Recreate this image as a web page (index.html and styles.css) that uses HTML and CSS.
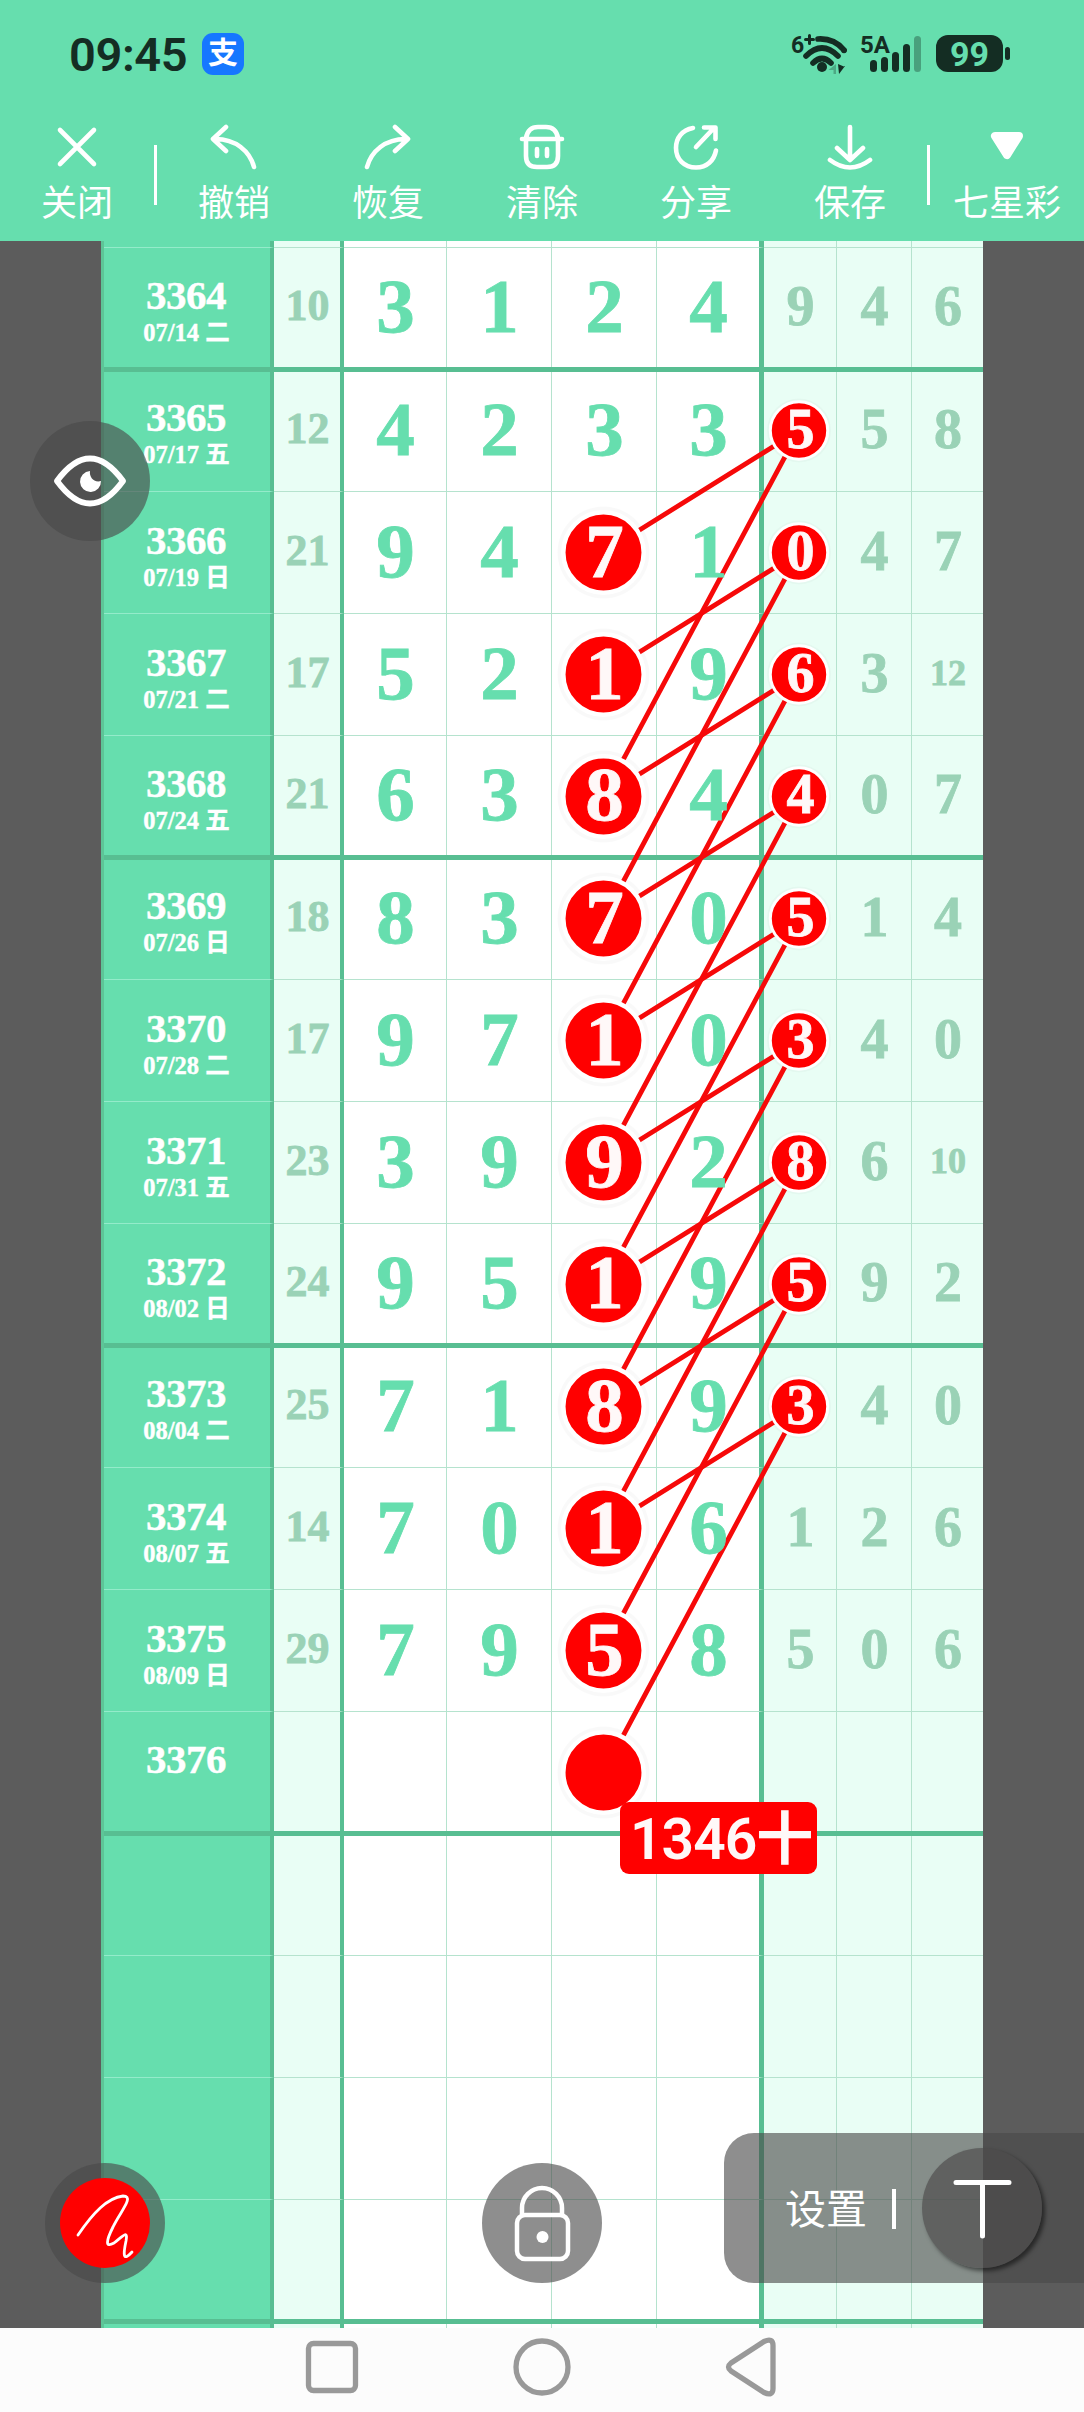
FILE: index.html
```html
<!DOCTYPE html>
<html lang="zh-CN">

<head>
    <meta charset="UTF-8">
    <meta name="viewport" content="width=device-width, initial-scale=1.0">
    <title>七星彩</title>
    <link rel="stylesheet" href="styles.css">
</head>

<body>
    <header>
        <div class="status">
            <span class="time">09:45</span>
            <span class="pay">支</span>
            <svg class="signals" width="222" height="44" viewBox="790 32 222 44">
                <g fill="#142d23">
                    <text x="791" y="53" font-size="23">6</text>
                    <path d="M805.500 39.500h8M809.500 35.500v8" stroke="#142d23" stroke-width="3" />
                    <g fill="none" stroke="#142d23" stroke-width="5.6">
                        <path d="M818 39Q834 38 844 50" />
                        <path d="M806 56Q822 40 838 56" stroke-linecap="round" />
                        <path d="M813 63Q822 54 831 63" stroke-linecap="round" />
                    </g>
                    <circle cx="844" cy="50.5" r="2.8" />
                    <circle cx="822" cy="67" r="5" />
                    <path d="M838 64l7 3v-1l-6 8z" />
                    <path d="M836 64v10h-2.500v-4h-5z" opacity=".3" />
                    <text x="860" y="52.5" font-size="24" textLength="30" lengthAdjust="spacingAndGlyphs">5A</text>
                    <rect x="870" y="60" width="7" height="12" rx="3.500" />
                    <rect x="881" y="57" width="7" height="15" rx="3.500" />
                    <rect x="892" y="52" width="7" height="20" rx="3.500" />
                    <rect x="903" y="44" width="7" height="28" rx="3.500" />
                    <rect x="914" y="36" width="7" height="36" rx="3.500" opacity=".35" />
                    <rect x="936" y="35" width="67" height="37" rx="12" />
                    <rect x="1005" y="47" width="5" height="13" rx="2.500" />
                </g>
                <text x="950" y="66" font-size="34" fill="#66deae">99</text>
            </svg>
        </div>
        <nav class="toolbar">
            <button>
                <svg viewBox="0 0 48 48"><path d="M7 6l34 34M41 6L7 40" /></svg>
                关闭
            </button>
            <i class="divider"></i>
            <button>
                <svg viewBox="0 0 48 48"><path d="M16 3L3 15l13 12M3 15c23-1 37 13 41 28" /></svg>
                撤销
            </button>
            <button>
                <svg viewBox="0 0 48 48"><path d="M31 3l13 12-13 12M44 15C21 14 7 28 3 43" /></svg>
                恢复
            </button>
            <button>
                <svg viewBox="0 0 48 48"><path d="M4 15h40M8 15v17q0 11 11 11h10q11 0 11-11V15M8 14q2-11 12-11h8q10 0 12 11M19 25v7M29 25v7" /></svg>
                清除
            </button>
            <button>
                <svg viewBox="0 0 48 48"><path d="M21 4C10 6 4 14 4 24c0 11 8 19.500 20 19.500 11 0 18-7 20-17M24 23L42 4M32 3.500h11.500V15" /></svg>
                分享
            </button>
            <button>
                <svg viewBox="0 0 48 48"><path d="M24 3v33M11 24l13 12 13-12M4 36q20 15 40 0" /></svg>
                保存
            </button>
            <i class="divider"></i>
            <button>
                <svg viewBox="0 0 48 48"><path class="solid" d="M12 12h24L24 31z" /></svg>
                七星彩
            </button>
        </nav>
    </header>

    <main class="stage">
        <div class="chart" id="chart"></div>
        <svg class="lines" id="lines" width="1084" height="2087"></svg>
        <div class="note">1346十</div>

        <div class="fab eye">
            <svg width="120" height="120">
                <path d="M27 60c22-30 44-30 66 0-22 30-44 30-66 0z" stroke-width="6" />
                <path class="fill" d="M60 50a10.500 10.500 0 1 0 11 10c-7 2-12-4-11-10z" />
            </svg>
        </div>
        <div class="fab pen">
            <svg width="120" height="120">
                <circle cx="60" cy="60" r="45" fill="#f00" stroke="none" />
                <path d="M33 72C48 50 62 35 78 33c12 0-3 16-10 31-7 14-8 21 1 16 10-8 14-13 12-2-3 14-3 21 6 11" stroke-width="2.800" />
            </svg>
        </div>
        <div class="fab lock">
            <svg width="120" height="120">
                <path d="M40 52V45a20 20 0 0 1 40 0v7" stroke-width="4.500" />
                <rect x="35" y="52" width="51" height="44" rx="8" stroke-width="4.500" />
                <circle class="fill" cx="60.500" cy="74" r="6" />
            </svg>
        </div>
        <div class="panel">
            <span>设置</span>
            <i></i>
            <div class="text-tool">
                <svg width="120" height="120"><path d="M34 34.500h53M60.500 35v53" stroke-width="5" /></svg>
            </div>
        </div>
    </main>

    <footer>
        <svg width="56" height="60" viewBox="0 0 56 60"><rect x="4.500" y="6.500" width="47" height="47" rx="5" /></svg>
        <svg width="60" height="60" viewBox="0 0 60 60"><circle cx="30" cy="30" r="26" /></svg>
        <svg width="56" height="60" viewBox="0 0 56 60"><path d="M7 26L40 4.500q9-4 9 4v43q0 8-9 4L7 34q-5-4 0-8z" /></svg>
    </footer>

    <script>
        // issue, date, sum, seven numbers
        const draws = [
            ['3364', '07/14 二', 10, 3, 1, 2, 4, 9, 4, 6],
            ['3365', '07/17 五', 12, 4, 2, 3, 3, 5, 5, 8],
            ['3366', '07/19 日', 21, 9, 4, 7, 1, 0, 4, 7],
            ['3367', '07/21 二', 17, 5, 2, 1, 9, 6, 3, 12],
            ['3368', '07/24 五', 21, 6, 3, 8, 4, 4, 0, 7],
            ['3369', '07/26 日', 18, 8, 3, 7, 0, 5, 1, 4],
            ['3370', '07/28 二', 17, 9, 7, 1, 0, 3, 4, 0],
            ['3371', '07/31 五', 23, 3, 9, 9, 2, 8, 6, 10],
            ['3372', '08/02 日', 24, 9, 5, 1, 9, 5, 9, 2],
            ['3373', '08/04 二', 25, 7, 1, 8, 9, 3, 4, 0],
            ['3374', '08/07 五', 14, 7, 0, 1, 6, 1, 2, 6],
            ['3375', '08/09 日', 29, 7, 9, 5, 8, 5, 0, 6],
            ['3376', '&nbsp;'],
            [], [], [], [], []
        ];

        let html = '<div class="row first">' + '<div class="cell"></div>'.repeat(9) + '</div>';
        draws.forEach((d, i) => {
            html += `<div class="row${i % 4 === 0 ? ' thick' : ''}">`;
            html += `<div class="cell"><b>${d[0] || ''}</b><small>${d[1] || ''}</small></div>`;
            for (let c = 2; c < 10; c++) {
                const hit = (c === 5 && i > 1) || (c === 7 && i > 0 && i < 10);
                const cls = (hit ? 'hit ' : '') + (c > 2 && d[c] > 9 ? 'wide' : '');
                html += `<div class="cell"><span class="${cls}">${d[c] ?? ''}</span></div>`;
            }
            html += '</div>';
        });
        document.getElementById('chart').innerHTML = html;

        // marked numbers and the links between them
        const bigX = 603.5, smallX = 799, top0 = 189.5, step = 122;
        let halos = '', links = '', dots = '';
        for (let i = 0; i < 9; i++) {
            const y = top0 + i * step;
            links += `<path d="M${bigX} ${y + step}L${smallX} ${y}L${bigX} ${y + step * 3}"/>`;
            halos += `<circle cx="${smallX}" cy="${y}" r="32"/>`;
            dots += `<circle cx="${smallX}" cy="${y}" r="28.7"/>`;
        }
        for (let i = 1; i < 12; i++) {
            const y = top0 + i * step;
            halos += `<circle cx="${bigX}" cy="${y}" r="46"/>`;
            dots += `<circle cx="${bigX}" cy="${y}" r="40.2" class="big"/>`;
        }
        document.getElementById('lines').innerHTML =
            `<g class="halos">${halos}</g><g class="links">${links}</g><g class="dots">${dots}</g>`;
    </script>
</body>

</html>
```
FILE: styles.css
```css
* {
    box-sizing: border-box;
}

body {
    margin: 0;
    width: 1084px;
    height: 2412px;
    overflow: hidden;
    background: #5c5c5c;
    font-family: Roboto, "Noto Sans CJK SC", sans-serif;
}

header {
    height: 241px;
    background: #66deae;
}

.status {
    display: flex;
    height: 108px;
    padding-left: 69px;
    align-items: center;
}

.time {
    width: 133px;
    font-size: 47px;
    font-weight: 600;
    letter-spacing: -.4px;
    color: #142d23;
}

.pay {
    width: 42px;
    height: 42px;
    border-radius: 11px;
    background: #1677ff;
    color: #fff;
    font-size: 30px;
    font-weight: 700;
    line-height: 39px;
    text-align: center;
}

.signals {
    margin-left: 546px;
    font-weight: 700;
}

.toolbar {
    display: flex;
    padding-top: 16px;
}

.toolbar button {
    display: flex;
    flex-direction: column;
    align-items: center;
    width: 154px;
    padding: 0;
    border: none;
    background: none;
    color: #fff;
    font-family: inherit;
    font-size: 36px;
    line-height: 56px;
    white-space: nowrap;
}

.toolbar svg {
    width: 48px;
    height: 48px;
    margin-bottom: 4px;
}

svg path,
.fab svg,
footer svg {
    stroke-linecap: round;
    stroke-linejoin: round;
}

.toolbar path {
    fill: none;
    stroke: #fff;
    stroke-width: 4.6;
}

.toolbar .solid {
    fill: #fff;
    stroke-width: 8;
}

.divider {
    width: 3px;
    height: 60px;
    margin-top: 21px;
    background: #fff;
}

/* chart */
.stage {
    position: relative;
    height: 2087px;
    overflow: hidden;
}

.chart {
    width: 882px;
    margin-left: 101px;
    border-left: 3px solid #5dc597;
    background: #fff;
}

.row {
    display: grid;
    grid-template-columns: 170px 70px 103px 105px 105px 107px 73px 75px 71px;
    height: 122px;
}

.row.first {
    height: 7px;
}

.row.thick {
    height: 124px;
    border-bottom: 5px solid #58be92;
}

.row.thick + .row {
    height: 120px;
}

.cell {
    display: flex;
    flex-direction: column;
    align-items: center;
    justify-content: center;
    min-width: 0;
    border-right: 1px solid #b5e3ce;
    border-bottom: 1px solid #b5e3ce;
    font-family: "Liberation Serif", "Noto Sans CJK SC", serif;
    font-size: 77px;
    font-weight: 700;
    line-height: 84px;
    color: #66deae;
    -webkit-text-stroke: .8px;
}

.thick .cell {
    border-bottom: none;
}

.cell:first-child {
    border-right: 4px solid #58be92;
    border-bottom-color: #94ebca;
    background: #66deae;
    color: #fff;
    -webkit-text-stroke: .4px;
}

.cell:first-child b {
    padding-top: 8px;
    padding-right: 2px;
    font-size: 41px;
    line-height: 42px;
    letter-spacing: -.5px;
}

.cell:first-child small {
    padding-right: 1px;
    font-size: 24.5px;
    line-height: 34px;
}

.thick + .row .cell:first-child b {
    padding-top: 5px;
}

.cell:nth-child(2) {
    border-right: 4px solid #58be92;
    background: #e9fef5;
    color: #9ad2b6;
    font-size: 44px;
}

.cell:nth-child(6) {
    border-right: 5px solid #58be92;
}

.cell:nth-child(n+7) {
    background: #e9fef5;
    color: #9ad2b6;
    font-size: 56px;
}

.cell:last-child {
    border-right: none;
}

.cell span {
    position: relative;
    z-index: 2;
    padding: 0 0 3px 1px;
}

.thick + .row .cell span {
    padding-bottom: 5px;
}

.cell .wide {
    font-size: 36px;
}

.cell .hit {
    color: #fff8f8;
}

.lines {
    position: absolute;
    left: 0;
    top: 0;
    z-index: 1;
}

.halos {
    fill: rgba(0, 0, 0, .025);
}

.links {
    fill: none;
    stroke: #f60909;
    stroke-width: 4.8;
}

.dots {
    fill: #f00;
    stroke: #fff;
    stroke-width: 3;
}

.dots .big {
    stroke-width: 4.5;
}

.note {
    position: absolute;
    left: 620px;
    top: 1561px;
    z-index: 3;
    width: 197px;
    height: 72px;
    padding-left: 10px;
    border-radius: 9px;
    background: #f00;
    color: #fff8f8;
    font-size: 57px;
    font-weight: 600;
    letter-spacing: -1px;
    line-height: 76px;
    white-space: nowrap;
}

/* floating buttons */
.fab {
    position: absolute;
    z-index: 4;
    width: 120px;
    height: 120px;
    border-radius: 50%;
    background: rgba(73, 73, 73, .62);
}

.fab svg,
.text-tool svg {
    display: block;
    fill: none;
    stroke: #fff;
}

.fab .fill {
    fill: #fff;
    stroke: none;
}

.eye {
    left: 30px;
    top: 180px;
}

.pen {
    left: 45px;
    top: 1922px;
}

.lock {
    left: 482px;
    top: 1922px;
}

.panel {
    position: absolute;
    right: 0;
    bottom: 45px;
    z-index: 4;
    display: flex;
    align-items: center;
    width: 360px;
    height: 150px;
    padding-left: 61px;
    border-radius: 30px 0 0 30px;
    background: rgba(73, 73, 73, .62);
    color: #fff;
    font-size: 41px;
}

.panel span {
    margin-top: -4px;
}

.panel i {
    width: 4px;
    height: 40px;
    margin: 2px 26px 0 25px;
    background: #fff;
}

.text-tool {
    flex: none;
    width: 120px;
    height: 120px;
    border-radius: 50%;
    background: rgba(75, 73, 74, .65);
    box-shadow: 3px 3px 4px rgba(0, 0, 0, .5);
}

footer {
    display: flex;
    justify-content: center;
    gap: 172px;
    height: 84px;
    padding: 9px 0 0 0;
    background: #fcfcfc;
}

footer svg {
    flex: none;
    margin: 0 -10px;
    fill: none;
    stroke: #999;
    stroke-width: 5.3;
}
```
